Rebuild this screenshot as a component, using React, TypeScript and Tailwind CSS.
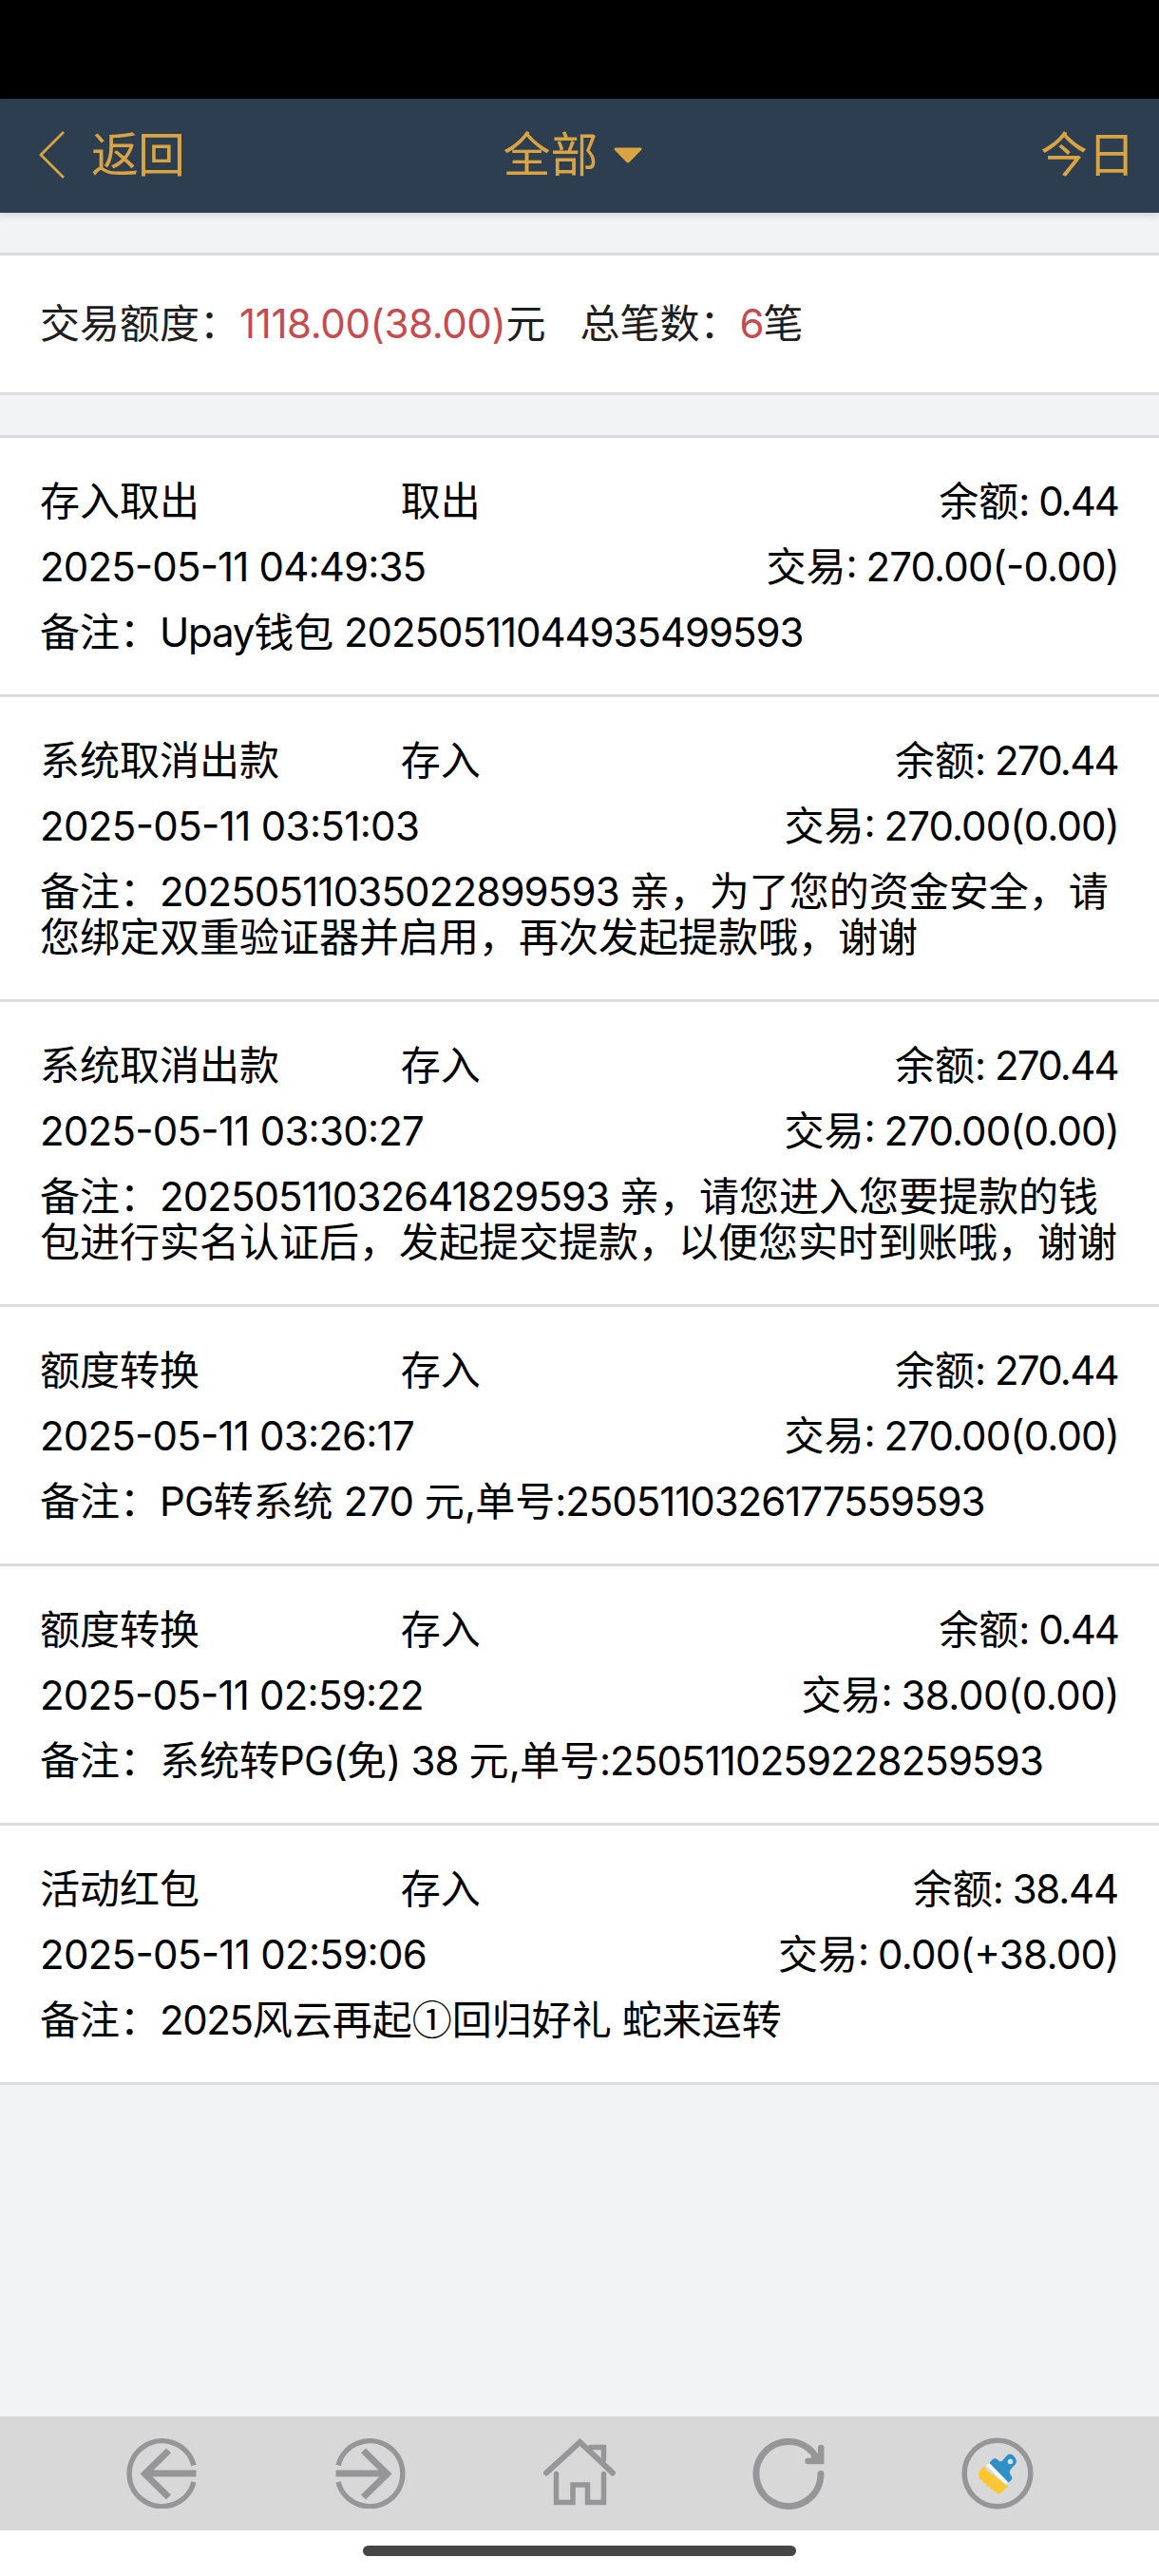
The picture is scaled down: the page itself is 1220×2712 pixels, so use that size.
import type { ReactNode } from "react";

type Entry = {
  kind: string;
  action: string;
  time: string;
  timeTracking: string;
  balance: string;
  balanceTracking: string;
  amount: string;
  amountTracking: string;
  note: ReactNode;
};

function Latin({ children, tracking = "tracking-[-0.85px]" }: { children: ReactNode; tracking?: string }) {
  return <span className={tracking}>{children}</span>;
}

const entries: Entry[] = [
  {
    kind: "存入取出",
    action: "取出",
    time: "2025-05-11 04:49:35",
    timeTracking: "tracking-[-0.85px]",
    balance: "0.44",
    balanceTracking: "tracking-[-2px]",
    amount: "270.00(-0.00)",
    amountTracking: "tracking-[-0.85px]",
    note: (
      <>
        <Latin tracking="tracking-[-1.2px]">Upay</Latin>钱包
        <Latin tracking="tracking-[-1.05px]"> 20250511044935499593</Latin>
      </>
    ),
  },
  {
    kind: "系统取消出款",
    action: "存入",
    time: "2025-05-11 03:51:03",
    timeTracking: "tracking-[-0.65px]",
    balance: "270.44",
    balanceTracking: "tracking-[-1.75px]",
    amount: "270.00(0.00)",
    amountTracking: "tracking-[-0.9px]",
    note: (
      <>
        <Latin>20250511035022899593 </Latin>亲，为了您的资金安全，请
        <br />
        您绑定双重验证器并启用，再次发起提款哦，谢谢
      </>
    ),
  },
  {
    kind: "系统取消出款",
    action: "存入",
    time: "2025-05-11 03:30:27",
    timeTracking: "tracking-[-0.75px]",
    balance: "270.44",
    balanceTracking: "tracking-[-1.75px]",
    amount: "270.00(0.00)",
    amountTracking: "tracking-[-0.9px]",
    note: (
      <>
        <Latin tracking="tracking-[-0.95px]">20250511032641829593 </Latin>亲，请您进入您要提款的钱
        <br />
        包进行实名认证后，发起提交提款，以便您实时到账哦，谢谢
      </>
    ),
  },
  {
    kind: "额度转换",
    action: "存入",
    time: "2025-05-11 03:26:17",
    timeTracking: "tracking-[-0.8px]",
    balance: "270.44",
    balanceTracking: "tracking-[-1.75px]",
    amount: "270.00(0.00)",
    amountTracking: "tracking-[-0.9px]",
    note: (
      <>
        <Latin>PG</Latin>转系统<Latin tracking="tracking-[-0.5px]"> 270 </Latin>元<Latin>,</Latin>单号
        <Latin tracking="tracking-[-1.05px]">:2505110326177559593</Latin>
      </>
    ),
  },
  {
    kind: "额度转换",
    action: "存入",
    time: "2025-05-11 02:59:22",
    timeTracking: "tracking-[-0.8px]",
    balance: "0.44",
    balanceTracking: "tracking-[-2px]",
    amount: "38.00(0.00)",
    amountTracking: "tracking-[-0.5px]",
    note: (
      <>
        系统转<Latin>PG(</Latin>免<Latin>) 38 </Latin>元<Latin>,</Latin>单号
        <Latin tracking="tracking-[-0.9px]">:2505110259228259593</Latin>
      </>
    ),
  },
  {
    kind: "活动红包",
    action: "存入",
    time: "2025-05-11 02:59:06",
    timeTracking: "tracking-[-0.7px]",
    balance: "38.44",
    balanceTracking: "tracking-[-1.2px]",
    amount: "0.00(+38.00)",
    amountTracking: "tracking-[-0.7px]",
    note: (
      <>
        <Latin tracking="tracking-[-1.4px]">2025</Latin>风云再起
        <span className="font-['Noto_Sans_CJK_SC',sans-serif] leading-none">①</span>回归好礼
        <Latin> </Latin>蛇来运转
      </>
    ),
  },
];

function EntryRow({ entry }: { entry: Entry }) {
  return (
    <li className="flex flex-col gap-[21px] border-b-[3px] border-[#dcdcde] bg-white px-[42px] pt-[43px] pb-[41px] whitespace-nowrap">
      <div className="grid h-12 grid-cols-3">
        <span>{entry.kind}</span>
        <span className="pl-px">{entry.action}</span>
        <span className="pr-px text-right">
          余额<Latin tracking="tracking-[-1.5px]">: </Latin>
          <Latin tracking={entry.balanceTracking}>{entry.balance}</Latin>
        </span>
      </div>
      <div className="flex h-12 justify-between [font-feature-settings:'case']">
        <Latin tracking={entry.timeTracking}>{entry.time}</Latin>
        <span>
          交易<Latin tracking="tracking-[-1.5px]">: </Latin>
          <Latin tracking={entry.amountTracking}>{entry.amount}</Latin>
        </span>
      </div>
      <p>备注：{entry.note}</p>
    </li>
  );
}

function BackArrow() {
  return (
    <svg viewBox="0 0 74 74" className="size-[74px]" fill="none" stroke="#969698">
      <path d="M71 28.500A34.500 34.500 0 1 0 71 46" strokeWidth="5.500" />
      <path d="M73.500 37H19M44.500 13L19.500 37.500L44.500 62" strokeWidth="7" />
    </svg>
  );
}

function HomeIcon() {
  return (
    <svg viewBox="0 0 76 76" className="size-[76px]" fill="none" stroke="#969698" strokeLinecap="round">
      <path d="M3 37.500L38.500 5L73 37.500" strokeWidth="6" />
      <path d="M50 10.500H63.500V24" strokeWidth="5.500" />
      <path d="M13.500 38.500V68.500H31V50H46.500V68.500H63.500V38.500" strokeWidth="5.500" />
    </svg>
  );
}

function ReloadIcon() {
  return (
    <svg viewBox="0 0 76 76" className="size-[76px]" fill="none" stroke="#969698" strokeLinecap="round">
      <path d="M72 38.500A34 34 0 1 1 66.500 20" strokeWidth="7" />
      <path d="M72.200 11V25H58.500" strokeWidth="6.500" />
      <path d="M64 16L72 25H62Z" fill="#969698" strokeWidth="2" />
    </svg>
  );
}

function BrushIcon() {
  return (
    <svg viewBox="0 0 76 76" className="size-[76px]" fill="none">
      <circle cx="38" cy="38" r="34.800" stroke="#969698" strokeWidth="5.500" />
      <path
        d="M25 33.500L49 51.500L41 59L38 59.500L36 56.500L34.500 57.500L33 54.500L30.500 55L29.500 51.500L27 51.500L26 48L23 48L22 45L19.500 44.500L18 38.500L19 35.500L25 30Z"
        fill="#fcc62f"
      />
      <path d="M35 51L38 47M30 50L33 46" stroke="#e9cf7c" strokeWidth="1" />
      <path d="M26 29.500L30 26.500L50 44L46.500 50Z" fill="#f7fafc" />
      <path
        d="M29.500 27L33 23Q35.500 21.500 38 23.500L40.500 25.500Q43 25.500 44.500 23L48 19Q51 16.500 54.500 19L56.500 21.500Q59 25 57 28L52.500 33Q49.500 36 51.500 39L53 41.500Q54 43.500 52.500 45L49.500 47.500Z"
        fill="#318fc8"
      />
      <circle cx="51.500" cy="25.500" r="2.800" fill="#d5e3ec" />
    </svg>
  );
}

export default function App() {
  return (
    <div className="flex h-[2712px] w-[1220px] flex-col overflow-hidden bg-[#f2f3f5] font-['Inter','Noto_Sans_CJK_SC',sans-serif] text-[42px] leading-[48px] text-black">
      <div className="h-[104px] shrink-0 bg-black" />
      <header className="grid h-[120px] shrink-0 grid-cols-3 items-center bg-[#2d3e50] pr-[25px] pb-0.5 pl-[40px] text-[50px] text-[#d9a441] shadow-[0_2px_8px_rgba(45,62,80,0.2)]">
        <div className="flex items-center gap-[28px]">
          <svg viewBox="0 0 28 52" className="h-[52px] w-[28px]" fill="none" stroke="currentColor" strokeWidth="2.800">
            <path d="M27 2L3 26L27 50" />
          </svg>
          <span className="tracking-[-1px]">返回</span>
        </div>
        <div className="flex items-center justify-center gap-[16px] pr-[30px]">
          <span>全部</span>
          <svg viewBox="0 0 30 17" className="h-[17px] w-[30px]" fill="currentColor">
            <path d="M2 0.500H28Q30.500 1 29 3L16.500 15.800Q15 17 13.500 15.800L1 3Q-0.500 1 2 0.500Z" />
          </svg>
        </div>
        <span className="text-right">今日</span>
      </header>

      <section className="mt-[42px] flex h-[150px] shrink-0 items-center border-y-[3px] border-[#dcdcde] bg-white px-[42px] whitespace-pre text-[#1e1e1e]">
        <span>交易额度：</span>
        <span className="tracking-[-0.4px] text-[#c54b50]">1118.00(38.00)</span>
        <span className="mr-[36px]">元</span>
        <span>总笔数：</span>
        <span className="tracking-[-1px] text-[#c54b50]">6</span>
        <span>笔</span>
      </section>

      <ul className="mt-[42px] border-t-[3px] border-[#dcdcde]">
        {entries.map((entry) => (
          <EntryRow key={entry.time} entry={entry} />
        ))}
      </ul>

      <nav className="mt-auto grid h-[120px] shrink-0 grid-cols-5 items-center justify-items-center bg-[#d8d8d9] px-[60px]">
        <BackArrow />
        <div className="-scale-x-100">
          <BackArrow />
        </div>
        <HomeIcon />
        <ReloadIcon />
        <BrushIcon />
      </nav>
      <div className="flex h-12 shrink-0 justify-center bg-white pt-4">
        <div className="h-[11px] w-[456px] rounded-full bg-[#464646]" />
      </div>
    </div>
  );
}
